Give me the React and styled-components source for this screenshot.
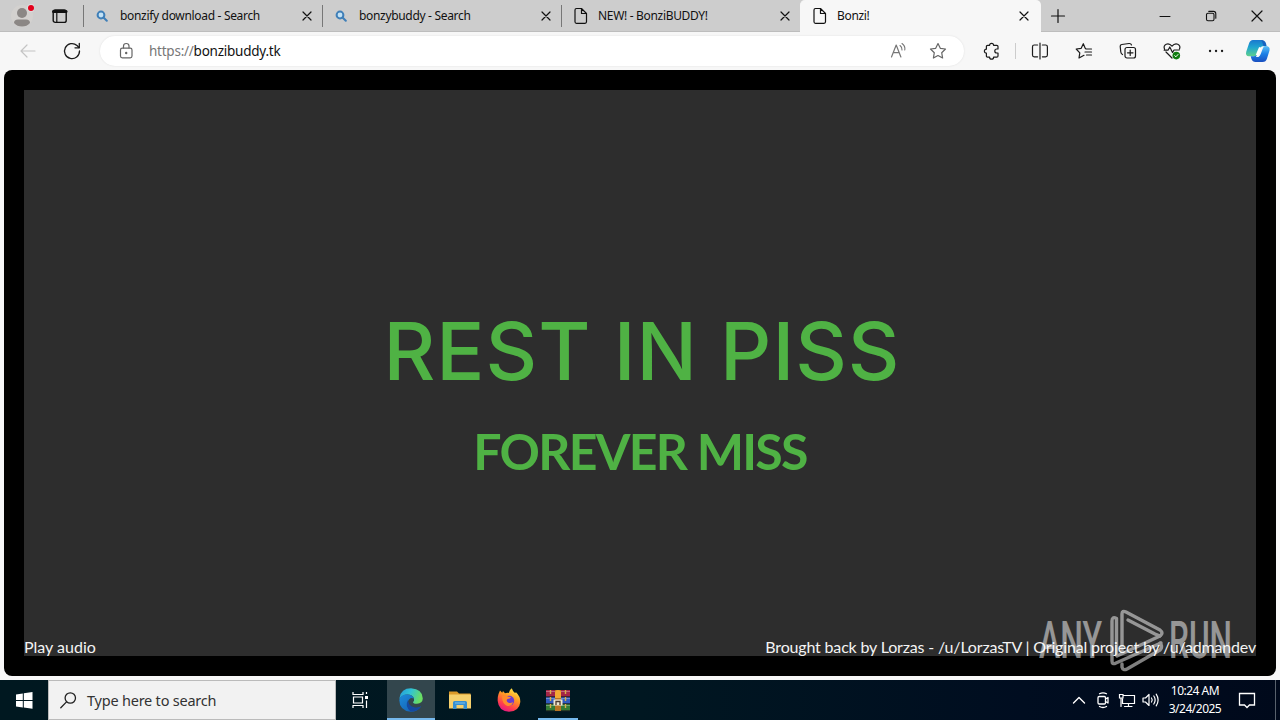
import styled, { createGlobalStyle, css } from 'styled-components'

const GlobalStyle = createGlobalStyle`
    * {
        box-sizing: border-box;
    }
    body {
        margin: 0;
        overflow: hidden;
        font-family: "Noto Sans", "Open Sans", sans-serif;
    }
    svg {
        display: block;
        flex: none;
    }
`

const Icon = ({ w = 20, h, sw = 1.2, color = '#1b1b1b', children }) => (
    <svg width={w} height={h || w} viewBox={`0 0 ${w} ${h || w}`} fill="none" stroke={color} strokeWidth={sw} strokeLinecap="round" strokeLinejoin="round">
        {children}
    </svg>
)

const SearchFavicon = () => (
    <Icon w={12} sw={2} color="#3f7fb8">
        <circle cx="5" cy="5" r="3.4" fill="#c3e2f5" />
        <path d="M7.8 7.8 L10.8 10.8" />
    </Icon>
)

const PageFavicon = () => (
    <Icon w={14} h={18} sw={1.2} color="#111">
        <path d="M2.5 1.5 H7.5 L12.5 6.5 V14.8 Q12.5 16.3 11 16.3 H2.5 Q1 16.3 1 14.8 V3 Q1 1.5 2.5 1.5 Z M7.5 1.8 V6.5 H12.2" />
    </Icon>
)

const CloseIcon = ({ size = 8 }) => (
    <Icon w={size + 2} sw={1.2} color="#111">
        <path d={`M1 1 L${size + 1} ${size + 1} M${size + 1} 1 L1 ${size + 1}`} />
    </Icon>
)

const tabs = [
    { title: 'bonzify download - Search', search: true },
    { title: 'bonzybuddy - Search', search: true },
    { title: 'NEW! - BonziBUDDY!' },
    { title: 'Bonzi!', active: true },
]

const TabStrip = () => (
    <TabBar>
        <Profile>
            <svg width="24" height="26" viewBox="0 0 24 26">
                <circle cx="12" cy="13" r="11" fill="#d3d1cf" />
                <circle cx="12" cy="10" r="5" fill="#8b8785" />
                <path d="M4 20 Q4 16.5 8 16.5 H16 Q20 16.5 20 20 Q17 23.5 12 23.5 Q7 23.5 4 20 Z" fill="#8b8785" />
                <circle cx="21" cy="5" r="4" fill="#ddd" />
                <circle cx="21" cy="5" r="3" fill="#e3001b" />
            </svg>
        </Profile>
        <Workspaces>
            <Icon w={16} sw={1.4} color="#111">
                <rect x="1.2" y="2" width="13" height="12.4" rx="2" />
                <path d="M1.5 3.5 H14" strokeWidth="3" />
                <path d="M4.8 4 V14" strokeWidth="1.2" />
            </Icon>
        </Workspaces>
        {tabs.map((tab) => (
            <Tab key={tab.title} $active={tab.active}>
                <Favicon>{tab.search ? <SearchFavicon /> : <PageFavicon />}</Favicon>
                <TabTitle>{tab.title}</TabTitle>
                <CloseIcon />
            </Tab>
        ))}
        <NewTab>
            <Icon w={16} sw={1.2} color="#111"><path d="M8 1.5 V14.5 M1.5 8 H14.5" /></Icon>
        </NewTab>
        <WindowButtons>
            <WindowButton>
                <Icon w={12} sw={1} color="#111"><path d="M1 6.5 H11" /></Icon>
            </WindowButton>
            <WindowButton>
                <Icon w={12} sw={1.1} color="#111">
                    <rect x="1.5" y="3.3" width="7.5" height="7.5" rx="1.5" />
                    <path d="M3.8 1.4 H8.5 Q10.8 1.4 10.8 3.8 V8.3" />
                </Icon>
            </WindowButton>
            <WindowButton><CloseIcon size={10} /></WindowButton>
        </WindowButtons>
    </TabBar>
)

const Toolbar = () => (
    <ToolbarRow>
        <ToolButton $w={56}>
            <Icon color="#c4c4c4"><path d="M17 10 H3 M9 4 L3 10 L9 16" /></Icon>
        </ToolButton>
        <ToolButton $w={32}>
            <Icon sw={1.3}>
                <path d="M17.5 10 A7.5 7.5 0 1 1 15 4.5 L17 6.5" />
                <path d="M17.3 2.5 V6.8 H13" />
            </Icon>
        </ToolButton>
        <AddressBar>
            <Icon w={16} h={18} color="#666">
                <rect x="2.5" y="6.2" width="11.5" height="9.6" rx="1.8" />
                <path d="M5.5 6 V4 Q5.5 1.5 8.2 1.5 Q11 1.5 11 4 V6" />
                <circle cx="8.2" cy="11" r=".6" fill="#666" />
            </Icon>
            <Url><span>https://</span>bonzibuddy.tk</Url>
            <ToolButton $w={40}>
                <Icon color="#777">
                    <path d="M2.5 16 L7.2 4 L11.9 16 M4.2 11.7 H10.2" />
                    <path d="M11 4.5 Q13.2 6 13 9 M13 2.5 Q16.5 5 15.8 9" strokeWidth="1.1" />
                </Icon>
            </ToolButton>
            <ToolButton $w={38}>
                <Icon color="#666">
                    <path d="M10 2.6 L12.3 7.3 L17.5 8 L13.7 11.7 L14.6 17 L10 14.5 L5.4 17 L6.3 11.7 L2.5 8 L7.7 7.3 Z" />
                </Icon>
            </ToolButton>
        </AddressBar>
        <ToolButton $w={55}>
            <Icon>
                <path d="M7.6 4.3 A2 2 0 0 1 11.6 4.3 H14.8 Q16 4.3 16 5.5 V8 H14.8 A2 2 0 0 0 14.8 12 H16 V15 Q16 16.2 14.8 16.2 H11.6 A2 2 0 0 1 7.6 16.2 H5.6 Q4.4 16.2 4.4 15 V12.2 A2 2 0 0 1 4.4 8.2 V5.5 Q4.4 4.3 5.6 4.3 Z" />
            </Icon>
        </ToolButton>
        <Divider />
        <ToolButton>
            <Icon>
                <path d="M7.6 4 H4.2 Q2.5 4 2.5 5.8 V14 Q2.5 15.8 4.2 15.8 H7.6 M12.4 4 H15.6 Q17.4 4 17.4 5.8 V14 Q17.4 15.8 15.6 15.8 H12.4 M10 2 V18" />
            </Icon>
        </ToolButton>
        <ToolButton>
            <Icon>
                <path d="M11.2 7.2 L9.3 2.7 L7.2 7.3 L2.2 8 L5.8 11.8 L5 17 L10 14.3 M11.2 7.2 L12 8 H17.5 M11 11 H17.5 M12.5 14 H17.5" />
            </Icon>
        </ToolButton>
        <ToolButton>
            <Icon>
                <rect x="7" y="6.5" width="10.5" height="10.5" rx="2" />
                <path d="M12.2 9 V14.5 M9.5 11.8 H15 M4.5 13.5 Q3 12.7 2.8 11 L2.2 5.5 Q2 3.8 3.8 3.5 L11 2.5 Q13 2.3 13.5 4" />
            </Icon>
        </ToolButton>
        <ToolButton>
            <Icon>
                <path d="M2.5 8 Q1.2 4.5 4.2 3.2 Q7.5 2 10 5.2 Q12.5 2 15.8 3.2 Q18.8 4.5 17.5 8 M2.2 9.2 H6 L7.8 6 L10.5 11.5 L12 9 H17.2 M4 11 L10 17" />
                <circle cx="14.3" cy="14.6" r="3.8" fill="#107c10" stroke="none" />
                <path d="M12.7 14.7 L13.9 15.8 L16 13.5" stroke="#fff" strokeWidth="1" />
            </Icon>
        </ToolButton>
        <ToolButton>
            <Icon><path d="M4 10 h.1 M10 10 h.1 M16 10 h.1" strokeWidth="2.3" /></Icon>
        </ToolButton>
        <Copilot />
    </ToolbarRow>
)

const Copilot = () => (
    <svg width="40" height="26" viewBox="0 0 40 26">
        <defs>
            <linearGradient id="cpLeft" x1="0" y1="0" x2="0" y2="1">
                <stop offset="0" stopColor="#1a78cf" />
                <stop offset=".45" stopColor="#20a5cf" />
                <stop offset="1" stopColor="#5fd08c" />
            </linearGradient>
            <linearGradient id="cpRight" x1="0" y1="0" x2="0" y2="1">
                <stop offset="0" stopColor="#5cc0f5" />
                <stop offset=".5" stopColor="#1c7fe6" />
                <stop offset="1" stopColor="#1a4fc0" />
            </linearGradient>
        </defs>
        <path d="M15 2 H22.5 Q25.5 2 26.5 5.5 L27.3 8.3 H24.5 Q22.5 8.3 21.7 11 L19.5 16.3 Q18.7 18.3 16 18.3 H11 Q7 18 8.3 13.5 L11 5.5 Q12 2 15 2 Z" fill="url(#cpLeft)" />
        <path d="M27.5 8 Q32.5 8 31.5 12.5 L29 20.5 Q28 24 24.5 24 H17.5 Q14.5 24 13.5 21 L12.7 18.3 H16 Q18 18.3 19 16 L20.5 12 L18 19 H20.5 Q22 18 22.7 16 L25 10 Q25.7 8 27.5 8 Z" fill="url(#cpRight)" />
        <path d="M23.5 2 Q27 2 28 5.5 L28.6 8 H25.5 L24.5 5 Q24 2.6 22.5 2 Z" fill="#1763c0" />
        <path d="M22.3 9.5 L19 17.3" stroke="#fff" strokeWidth="2.6" />
    </svg>
)

const Watermark = () => (
    <WatermarkBox>
        <svg width="210" height="72" viewBox="0 0 210 72" fill="none" stroke="#fff" strokeWidth="3.4" strokeLinejoin="round" strokeLinecap="round">
            <g fill="#fff" stroke="none" fontFamily="Roboto, sans-serif" fontSize="51" fontWeight="500">
                <text x="3" y="51" textLength="63" lengthAdjust="spacingAndGlyphs">ANY</text>
                <text x="133" y="51" textLength="63" lengthAdjust="spacingAndGlyphs">RUN</text>
            </g>
            <path d="M80.5 13 V11.5 Q76 9 76 14 V54 Q76 58 80 56 L125 36 M80.5 13 V48" />
            <path d="M86 46 V7 Q86 3 90 5 L124 23 Q128 26 124 29 L119 27 L92 13" />
            <path d="M81 49 L124 29 M86 57 V60 Q87 64 91 62 L124 43 Q127 40 124 36" />
        </svg>
    </WatermarkBox>
)

const EdgeIcon = () => (
    <svg width="24" height="24" viewBox="0 0 24 24">
        <defs>
            <linearGradient id="edgeTop" x1="0" y1="0" x2="1" y2=".3">
                <stop offset="0" stopColor="#2499d8" />
                <stop offset=".5" stopColor="#31c3d5" />
                <stop offset="1" stopColor="#6ade63" />
            </linearGradient>
            <linearGradient id="edgeBottom" x1="0" y1="0" x2="1" y2="1">
                <stop offset="0" stopColor="#1c8bdb" />
                <stop offset="1" stopColor="#1359ab" />
            </linearGradient>
        </defs>
        <path d="M.5 10 Q2 .3 12 .3 Q23.5 1 23.8 10.5 Q23.5 15.5 18 15.8 Q14 16 14 14 Q15.5 13 15 10.5 Q13.5 6.5 8.5 6.5 Q3 6.5 .5 11 Z" fill="url(#edgeTop)" />
        <path d="M.3 12 Q1.5 6.5 8 6.5 Q13.5 6.5 15 10.5 Q10.5 8.5 9 13.5 Q9 20 17 20.3 Q20 20 22.2 18.3 Q18 24 11.5 23.8 Q.5 22.5 .3 12 Z" fill="url(#edgeBottom)" />
        <path d="M9 12 Q5.5 18 11.5 23.5 Q19 23.5 22.2 18.3 Q19 20 16 19.4 Q9 18 9 12 Z" fill="#1549a0" />
    </svg>
)

const FolderIcon = () => (
    <svg width="22" height="20" viewBox="0 0 22 20">
        <path d="M0 1.5 H8 L10 3.5 H21.5 V8 H0 Z" fill="#dc9a28" />
        <path d="M0 4.5 H22 V18.5 H0 Z" fill="#f6d06c" />
        <path d="M4 19 V12.5 Q4 11 5.5 11 H16.5 Q18 11 18 12.5 V19 H14.5 V15 H7.5 V19 Z" fill="#3590d4" />
        <path d="M6 13 H16" stroke="#7cc0ea" strokeWidth="1" />
    </svg>
)

const FirefoxIcon = () => (
    <svg width="24" height="24" viewBox="0 0 24 24">
        <defs>
            <linearGradient id="fox" x1=".8" y1="0" x2=".3" y2="1">
                <stop offset="0" stopColor="#fff04a" />
                <stop offset=".4" stopColor="#ff9a24" />
                <stop offset=".75" stopColor="#ff3d4d" />
                <stop offset="1" stopColor="#e31587" />
            </linearGradient>
        </defs>
        <path d="M1.5 6 L3 2.5 L5.2 4.8 L6 3 L8 5.2 Q10 4.5 11.8 5 Q12 2 14.8 .2 Q15.5 3 18 5 L19 4.3 Q23.5 8.5 23.3 14 Q22.5 23 12 23.8 Q1.5 23 .7 13 Q.5 9 1.5 6 Z" fill="url(#fox)" />
        <circle cx="12.2" cy="12.8" r="5" fill="#6a3bd1" />
        <path d="M5 8 Q8 6 11.5 8.8 Q13.5 8.8 14 9.5 Q12.5 11 10.5 11 Q8.5 13 11.5 14.8 Q14 15.5 16 14 Q15 18.5 10.5 18 Q5 16 5 8 Z" fill="#ff8b2c" />
    </svg>
)

const WinrarIcon = () => (
    <svg width="24" height="23" viewBox="0 0 24 23">
        <rect y="1" width="24" height="7" fill="#a32547" />
        <rect y="8" width="24" height="7" fill="#315bc0" />
        <rect y="15" width="24" height="7" fill="#327c36" />
        <path d="M0 2.5 H24 M0 9.5 H24 M0 16.5 H24" stroke="#fff" strokeOpacity=".3" />
        <path d="M0 7.8 H24 M0 14.8 H24 M0 21.8 H24" stroke="#222" strokeWidth="1" />
        <path d="M4.5 1 V22 M19.5 1 V22" stroke="#d7ad4c" strokeWidth="1.4" strokeDasharray="4 3" />
        <rect x="9" y="1" width="6" height="21" fill="#b87424" />
        <path d="M9 9 V3.5 Q9 1 12 1 Q15 1 15 3.5 V9 Z" fill="#f3a933" />
        <rect x="7.5" y="10.5" width="9" height="6" fill="#eee6cf" />
        <path d="M10 16 V12.5 H14 V16" fill="none" stroke="#4c3a30" strokeWidth="1.3" />
    </svg>
)

const Taskbar = () => (
    <TaskbarRow>
        <StartButton>
            <svg width="17" height="17" viewBox="0 0 17 17" fill="#fff">
                <path d="M0 2.5 L6.8 1.4 V8 H0 Z M7.8 1.2 L16.5 0 V8 H7.8 Z M0 9 H6.8 V15.4 L0 14.4 Z M7.8 9 H16.5 V16.8 L7.8 15.6 Z" />
            </svg>
        </StartButton>
        <SearchBox>
            <Icon w={18} sw={1.3} color="#222">
                <circle cx="10.3" cy="7" r="5.2" />
                <path d="M6.5 10.9 L.8 16.8" />
            </Icon>
            <span>Type here to search</span>
        </SearchBox>
        <TaskButton $w={51}>
            <Icon w={22} h={18} sw={1.2} color="#fff">
                <path d="M2 1 V3.5 H12 V1 M2 17 V14.5 H12 V17 M2.5 6 H11.5 V12 H2.5 Z M15.5 1 V3 M15.5 9.5 V17" strokeLinejoin="miter" strokeLinecap="butt" />
                <path d="M15.5 5 V8" strokeWidth="3" strokeLinecap="butt" />
            </Icon>
        </TaskButton>
        <TaskButton $w={48} $active><EdgeIcon /></TaskButton>
        <TaskButton><FolderIcon /></TaskButton>
        <TaskButton><FirefoxIcon /></TaskButton>
        <TaskButton $running><WinrarIcon /></TaskButton>
        <Tray>
            <Icon w={24} sw={1.4} color="#fff"><path d="M6.5 15 L12 9.5 L17.5 15" /></Icon>
            <Icon w={24} sw={1.3} color="#fff">
                <rect x="7" y="8.5" width="7.5" height="7.5" rx="1.2" />
                <path d="M14.5 11 L17 9.5 V15 L14.5 13.5 M8.5 5.8 Q12 3.8 15.5 5.8 M8.5 18.5 Q12 20.5 15.5 18.5" />
            </Icon>
            <Icon w={24} sw={1.2} color="#fff">
                <path d="M8.5 7.5 H19.5 V15.5 H7.5 V11 M13.5 15.5 V18.5 M9.5 18.5 H17 M4.5 6.5 H8 V10 H4.5 Z M6 10 V18.5" strokeLinejoin="miter" />
            </Icon>
            <Icon w={24} sw={1.2} color="#fff">
                <path d="M4 10 H6.5 L10 6.5 V17.5 L6.5 14 H4 Z M12.5 10 Q14 12 12.5 14 M14.8 8 Q17.5 12 14.8 16 M17.2 6.2 Q21 12 17.2 17.8" />
            </Icon>
            <Clock>
                <span>10:24 AM</span>
                <span>3/24/2025</span>
            </Clock>
            <Icon w={18} sw={1.3} color="#fff">
                <path d="M1.5 2.5 H16.5 V14 H11.5 L9 16.5 L6.5 14 H1.5 Z" strokeLinejoin="miter" />
            </Icon>
        </Tray>
        <ShowDesktop />
    </TaskbarRow>
)

const App = () => (
    <Screen>
        <GlobalStyle />
        <TabStrip />
        <Toolbar />
        <PageFrame>
            <Page>
                <Message>
                    <Title>REST IN PISS</Title>
                    <Subtitle>FOREVER MISS</Subtitle>
                </Message>
                <PageFooter>
                    <span>Play audio</span>
                    <Credits>Brought back by Lorzas - /u/LorzasTV | Original project by /u/admandev</Credits>
                </PageFooter>
            </Page>
        </PageFrame>
        <Taskbar />
        <Watermark />
    </Screen>
)

const Screen = styled.div`
    position: relative;
    width: 1280px;
    height: 720px;
    display: flex;
    flex-direction: column;
    background: #f7f7f8;
    overflow: hidden;
`

const TabBar = styled.header`
    display: flex;
    flex: none;
    height: 32px;
    background: #cdcdcd;
    border-bottom: 1px solid #bdbdbd;
`

const Profile = styled.div`
    width: 44px;
    padding: 3px 0 0 10px;
`

const Workspaces = styled.div`
    width: 39px;
    padding: 8px 0 0 8px;
`

const Tab = styled.div`
    width: 239px;
    height: 31px;
    display: flex;
    align-items: center;
    padding: 0 10px 0 12px;
    border-left: 1px solid #777;
    border-image: linear-gradient(transparent 6px, #777 6px, #777 26px, transparent 26px) 1;
    ${props => props.$active && css`
        width: 241px;
        height: 32px;
        padding: 0 12px 1px 12px;
        background: #f7f7f7;
        border-image: none;
        border-left-color: #f7f7f7;
        border-radius: 5px 5px 0 0;
    `}
`

const Favicon = styled.div`
    width: 24px;
`

const TabTitle = styled.span`
    flex: 1;
    font-size: 12px;
    line-height: 16px;
    color: #111;
    white-space: nowrap;
    letter-spacing: -0.32px;
`

const NewTab = styled.div`
    width: 33px;
    display: flex;
    align-items: center;
    justify-content: center;
`

const WindowButtons = styled.div`
    display: flex;
    margin-left: auto;
`

const WindowButton = styled.div`
    width: 46px;
    display: flex;
    align-items: center;
    justify-content: center;
`

const ToolbarRow = styled.div`
    flex: none;
    display: flex;
    align-items: center;
    height: 38px;
    background: #f7f7f7;
`

const ToolButton = styled.div`
    width: ${props => props.$w || 44}px;
    flex: none;
    display: flex;
    align-items: center;
    justify-content: center;
`

const AddressBar = styled.div`
    width: 864px;
    height: 30px;
    margin-left: 12px;
    padding: 0 7px 0 18px;
    display: flex;
    align-items: center;
    background: #fff;
    border-radius: 15px;
    box-shadow: 0 0 2px #ddd;
`

const Url = styled.div`
    flex: 1;
    margin-left: 15px;
    font-size: 13.5px;
    letter-spacing: -0.24px;
    color: #111;
    span {
        color: #777;
    }
`

const Divider = styled.div`
    width: 1px;
    height: 16px;
    margin: 0 2px 0 -4px;
    background: #ccc;
`

const PageFrame = styled.main`
    flex: none;
    height: 606px;
    margin: 0 4px 4px;
    padding: 20px;
    display: flex;
    background: #000;
    border-radius: 8px;
`

const Page = styled.section`
    flex: 1;
    display: flex;
    flex-direction: column;
    justify-content: space-between;
    background: #2d2d2d;
    font-family: Lato, sans-serif;
`

const Message = styled.div`
    display: flex;
    flex-direction: column;
    align-items: center;
    padding-top: 211px;
    color: #4fb244;
`

const Title = styled.h1`
    margin: 0 0 0 4px;
    font-family: Inter, sans-serif;
    font-size: 80px;
    font-weight: 500;
    line-height: 100px;
    letter-spacing: 0.95px;
    white-space: nowrap;
`

const Subtitle = styled.h2`
    margin: 20px 0 0;
    font-size: 50px;
    font-weight: 700;
    line-height: 60px;
    letter-spacing: -1.7px;
    white-space: nowrap;
`

const PageFooter = styled.footer`
    display: flex;
    justify-content: space-between;
    font-size: 16px;
    line-height: 19px;
    color: #f4f4f4;
    white-space: nowrap;
`

const Credits = styled.span`
    letter-spacing: -0.17px;
`

const WatermarkBox = styled.div`
    position: absolute;
    left: 1036px;
    top: 607px;
    opacity: 0.5;
`

const TaskbarRow = styled.footer`
    flex: none;
    height: 40px;
    display: flex;
    background: linear-gradient(90deg, #001820, #001721 50%, #000d20 80%, #00091b);
`

const StartButton = styled.div`
    width: 48px;
    display: flex;
    align-items: center;
    justify-content: center;
`

const SearchBox = styled.div`
    width: 288px;
    display: flex;
    align-items: center;
    gap: 9px;
    padding-left: 11px;
    background: #f2f2f2;
    border: 1px solid #bbb;
    font-size: 14.5px;
    letter-spacing: -0.22px;
    color: #333;
`

const TaskButton = styled.div`
    width: ${props => props.$w || 49}px;
    display: flex;
    align-items: center;
    justify-content: center;
    ${props => props.$active && css`
        background: #33464d;
        box-shadow: inset 0 -2px #76b9ed;
    `}
    ${props => props.$running && css`
        background: linear-gradient(#76b9ed, #76b9ed) center bottom / 40px 2px no-repeat;
    `}
`

const Tray = styled.div`
    margin-left: auto;
    display: flex;
    align-items: center;
`

const Clock = styled.div`
    width: 64px;
    margin-right: 11px;
    display: flex;
    flex-direction: column;
    align-items: center;
    font-size: 12px;
    line-height: 18px;
    letter-spacing: -0.5px;
    color: #fff;
`

const ShowDesktop = styled.div`
    width: 5px;
    margin-left: 19px;
    border-left: 1px solid #58616c;
`

export default App
